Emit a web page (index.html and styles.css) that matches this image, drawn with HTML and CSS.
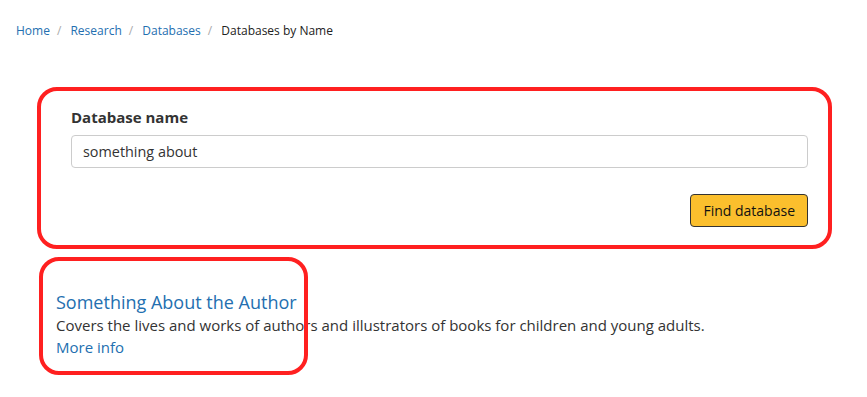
FILE: index.html
```html
<!DOCTYPE html>
<html lang="en">
<head>
  <meta charset="UTF-8" />
  <title>Databases by Name</title>
  <link rel="stylesheet" href="styles.css">
</head>
<body>

<nav class="breadcrumb">
  <a href="#">Home</a><span class="sep">/</span>
  <a href="#">Research</a><span class="sep">/</span>
  <a href="#">Databases</a><span class="sep">/</span>
  <span class="current">Databases by Name</span>
</nav>

<main class="page">
  <form class="search-form" onsubmit="return false">
    <label class="field-label" for="db-name">Database name</label>
    <input class="field-input" id="db-name" type="text" value="something about" />
    <div class="actions">
      <button class="btn-find" type="submit">Find database</button>
    </div>
  </form>

  <div class="results">
    <div class="result">
      <a class="result-title" href="#">Something About the Author</a>
      <div class="result-desc">Covers the lives and works of authors and illustrators of books for children and young adults.</div>
      <a class="result-more" href="#">More info</a>
    </div>
  </div>
</main>

<!-- annotation outlines -->
<div class="mark mark-form"></div>
<div class="mark mark-result"></div>

</body>
</html>
```

FILE: styles.css
```css
body {
  font-family: "Open Sans", "Liberation Sans", sans-serif;
  color: #333;
  margin: 0;
  background: #fff;
}
a {
  color: #236fb0;
  text-decoration: none;
}
.breadcrumb {
  font-size: 12px;
  padding: 22px 16px 0;
  line-height: 18px;
}
.breadcrumb .sep {
  color: #aaa;
  margin: 0 6px 0 7px;
}
.breadcrumb .current {
  color: #222;
}
.page {
  padding: 0 44px 0 56px;
}
.search-form {
  padding: 67px 15px 0;
}
.field-label {
  display: block;
  font-weight: bold;
  font-size: 15px;
  line-height: 20px;
  margin-bottom: 8px;
}
.field-input {
  display: block;
  box-sizing: border-box;
  width: 100%;
  height: 33px;
  border: 1px solid #ccc;
  border-radius: 4px;
  padding: 0 11px;
  font-family: inherit;
  font-size: 14.4px;
  color: #333;
}
.actions {
  display: flex;
  justify-content: flex-end;
  margin-top: 26px;
}
.btn-find {
  height: 33px;
  padding: 0 12px;
  background: #fbbf2d;
  border: 1px solid #333;
  border-radius: 4px;
  font-family: inherit;
  font-size: 14px;
  color: #111;
  cursor: pointer;
}
.results {
  margin-top: 63px;
}
.result-title {
  display: block;
  font-size: 18px;
  line-height: 24px;
}
.result-desc {
  font-size: 15px;
  line-height: 21px;
  margin-top: 1px;
}
.result-more {
  font-size: 15px;
  line-height: 20px;
}
.mark {
  position: absolute;
  border: 4px solid #ff2020;
  border-radius: 20px;
  box-sizing: border-box;
  pointer-events: none;
}
.mark-form {
  left: 37px;
  top: 87px;
  width: 795px;
  height: 162px;
}
.mark-result {
  left: 39px;
  top: 257px;
  width: 269px;
  height: 118px;
}
```
